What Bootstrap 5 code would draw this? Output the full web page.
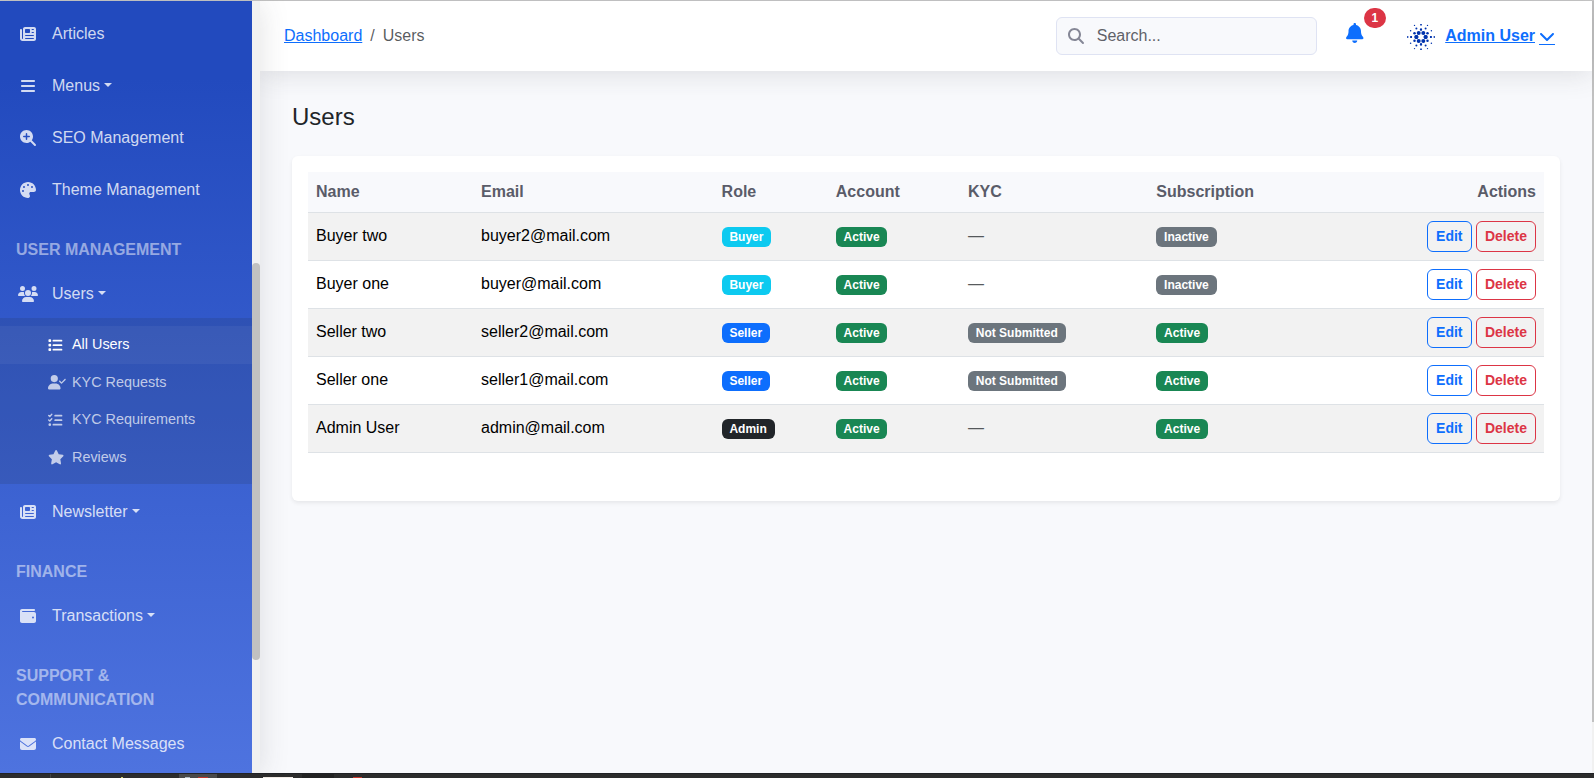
<!DOCTYPE html>
<html lang="en">
<head>
<meta charset="utf-8">
<title>Users - Dashboard</title>
<link href="https://cdn.jsdelivr.net/npm/bootstrap@5.3.0/dist/css/bootstrap.min.css" rel="stylesheet">
<style>
body{font-family:"Liberation Sans",Arial,sans-serif;background:#f8f9fc;height:778px;overflow:hidden}
.app-shell{height:773px;border-top:1px solid #c8c8c8}
.side-wrap{width:260px;z-index:5;box-shadow:0 .15rem 1.75rem 0 rgba(58,59,69,.15)}
.side-menu{width:252px;padding-top:9px;background:linear-gradient(180deg,#224abe 10%,#4e73df 100%)}
.side-scroll{width:8px;background:#f1f1f1;padding-top:262px}
.side-thumb{height:397px;border-radius:4px;background:#c1c1c1}
.side-link{height:48px;padding:0 16px;margin-bottom:4px;color:rgba(255,255,255,.8)}
.side-link.has-sub{margin-bottom:0}
.side-link .ico-slot{width:24px;margin-right:12px}
.side-head{padding:20px 16px 8px;font-weight:700;line-height:24px;color:rgba(255,255,255,.5)}
.side-sub{background:rgba(0,0,0,.15);background:rgba(33,37,41,.13);padding:8px 0;margin:0 0 4px}
.sub-link{height:37.6px;padding-left:48px;font-size:14.4px;color:rgba(255,255,255,.7)}
.sub-link.active{background:rgba(255,255,255,.05);color:#fff}
.sub-link .ico-slot{width:16px;margin-right:8px}
.fa-ico{height:1em;width:auto;fill:currentColor;flex:none;overflow:visible;display:block}
.top-bar{height:70px;padding:0 37px 0 24px;box-shadow:0 .15rem 1.75rem 0 rgba(58,59,69,.15);z-index:2}
.search-box{width:261px;height:38px;border:1px solid #dfe3f3;border-radius:6px;background:#f8f9fc;padding-left:11px;color:#858796}
.search-box span{color:#5f6168;margin-left:12.5px}
.bell{font-size:20px;margin:-6px 42.5px 0 28.5px;width:17px}
.bell-count{font-size:12px;line-height:12px;padding:4.2px 7.8px;left:18px;top:-15.5px}
.avatar{margin-right:8px;margin-top:2px}
.chev{margin-left:4px;height:20px;padding-top:5px;border-bottom:1px solid currentColor;margin-top:1px}
.chev svg{height:16px;margin-top:-2px}
.page-body{padding:32px 32px 0}
.page-body h1{font-size:24px;line-height:28.8px;margin:0 0 24px;font-weight:400}
.users-card{border:0;border-radius:6px;padding:16px 16px 48px;box-shadow:0 2px 4px rgba(0,0,0,.075)}
.users-table{table-layout:fixed;--bs-table-striped-color:#000;--bs-table-color:#000}
.users-table tbody td{color:#000}
.users-table th{background:#f8f9fc;color:#5a5c69}
.users-table .btn{font-weight:700;border-radius:6px}
.row-actions{gap:4.45px}
.page-scroll{width:2px;background:#f1f1f1}
.page-scroll div{height:721px;background:#c1c1c1}
.task-strip{height:5px;background:#2c2c2c;border-top:1px solid #202125}
.task-strip i{display:block;height:1px}
.task-strip .task-open{height:4px;width:38px;background:#4b4b4b;margin-left:56px;padding:0 9px 0 6px}
</style>
</head>
<body>
<svg width="0" height="0" class="position-absolute">
<symbol id="news" viewBox="0 0 512 512"><path d="M96 96c0-35.300 28.700-64 64-64H448c35.300 0 64 28.700 64 64V416c0 35.300-28.700 64-64 64H80c-44.200 0-80-35.800-80-80V128c0-17.700 14.300-32 32-32s32 14.300 32 32V400c0 8.800 7.200 16 16 16s16-7.200 16-16V96zm64 24v80c0 13.300 10.700 24 24 24H296c13.300 0 24-10.700 24-24V120c0-13.300-10.700-24-24-24H184c-13.300 0-24 10.700-24 24zm208-8c0 8.800 7.200 16 16 16h48c8.800 0 16-7.200 16-16s-7.200-16-16-16H384c-8.800 0-16 7.200-16 16zm0 96c0 8.800 7.200 16 16 16h48c8.800 0 16-7.200 16-16s-7.200-16-16-16H384c-8.800 0-16 7.200-16 16zM160 304c0 8.800 7.200 16 16 16H432c8.800 0 16-7.200 16-16s-7.200-16-16-16H176c-8.800 0-16 7.200-16 16zm0 96c0 8.800 7.200 16 16 16H432c8.800 0 16-7.200 16-16s-7.200-16-16-16H176c-8.800 0-16 7.200-16 16z"/></symbol>
</svg>
<div class="app-shell d-flex">
  <div class="side-wrap d-flex flex-shrink-0 position-relative">
    <nav class="side-menu overflow-hidden">
      <div class="side-link d-flex align-items-center"><span class="ico-slot d-flex justify-content-center"><svg class="fa-ico" viewBox="0 0 512 512"><use href="#news"/></svg></span>Articles</div>
      <div class="side-link d-flex align-items-center"><span class="ico-slot d-flex justify-content-center"><svg class="fa-ico" viewBox="0 0 448 512"><path d="M0 96C0 78.300 14.300 64 32 64H416c17.700 0 32 14.300 32 32s-14.300 32-32 32H32C14.300 128 0 113.700 0 96zM0 256c0-17.700 14.300-32 32-32H416c17.700 0 32 14.300 32 32s-14.300 32-32 32H32c-17.700 0-32-14.300-32-32zM448 416c0 17.700-14.300 32-32 32H32c-17.700 0-32-14.300-32-32s14.300-32 32-32H416c17.700 0 32 14.300 32 32z"/></svg></span><span class="dropdown-toggle">Menus</span></div>
      <div class="side-link d-flex align-items-center"><span class="ico-slot d-flex justify-content-center"><svg class="fa-ico" viewBox="0 0 512 512"><path d="M416 208c0 45.900-14.900 88.300-40 122.700L502.600 457.400c12.500 12.500 12.500 32.800 0 45.300s-32.800 12.500-45.300 0L330.700 376c-34.400 25.200-76.800 40-122.700 40C93.100 416 0 322.900 0 208S93.100 0 208 0S416 93.100 416 208zM184 296c0 13.300 10.700 24 24 24s24-10.700 24-24V232h64c13.300 0 24-10.700 24-24s-10.700-24-24-24H232V120c0-13.300-10.700-24-24-24s-24 10.700-24 24v64H120c-13.300 0-24 10.700-24 24s10.700 24 24 24h64v64z"/></svg></span>SEO Management</div>
      <div class="side-link d-flex align-items-center"><span class="ico-slot d-flex justify-content-center"><svg class="fa-ico" viewBox="0 0 512 512"><path d="M512 256c0 .9 0 1.800 0 2.700c-.4 36.500-33.600 61.300-70.100 61.300H344c-26.500 0-48 21.500-48 48c0 3.400 .4 6.700 1 9.900c2.100 10.200 6.500 20 10.800 29.900c6.100 13.800 12.100 27.500 12.100 42c0 31.800-21.600 60.700-53.400 62c-3.500 .1-7 .2-10.600 .2C114.600 512 0 397.400 0 256S114.600 0 256 0S512 114.600 512 256zM128 288a32 32 0 1 0-64 0 32 32 0 1 0 64 0zm0-96a32 32 0 1 0 0-64 32 32 0 1 0 0 64zM288 96a32 32 0 1 0-64 0 32 32 0 1 0 64 0zm96 96a32 32 0 1 0 0-64 32 32 0 1 0 0 64z"/></svg></span>Theme Management</div>
      <div class="side-head">USER MANAGEMENT</div>
      <div class="side-link has-sub d-flex align-items-center"><span class="ico-slot d-flex justify-content-center"><svg class="fa-ico" viewBox="0 0 640 512"><path d="M144 0a80 80 0 1 1 0 160A80 80 0 1 1 144 0zM512 0a80 80 0 1 1 0 160A80 80 0 1 1 512 0zM0 298.700C0 239.800 47.800 192 106.700 192h42.700c15.900 0 31 3.500 44.600 9.700c-1.300 7.200-1.900 14.700-1.900 22.300c0 38.200 16.800 72.500 43.300 96H21.300C9.600 320 0 310.400 0 298.700zM405.300 320c26-23.500 42.700-57.800 42.700-96c0-7.600-.7-15-1.900-22.300c13.600-6.300 28.700-9.700 44.600-9.700h42.700C592.200 192 640 239.800 640 298.700c0 11.800-9.600 21.300-21.300 21.300H405.300zM224 224a96 96 0 1 1 192 0 96 96 0 1 1-192 0zM128 485.300C128 411.700 187.700 352 261.300 352H378.700C452.300 352 512 411.700 512 485.300c0 14.700-11.900 26.700-26.700 26.700H154.700c-14.700 0-26.700-11.900-26.700-26.700z"/></svg></span><span class="dropdown-toggle">Users</span></div>
      <div class="side-sub">
        <div class="sub-link active d-flex align-items-center"><span class="ico-slot d-flex"><svg class="fa-ico" viewBox="0 0 512 512"><path d="M40 48C26.700 48 16 58.700 16 72v48c0 13.300 10.700 24 24 24H88c13.300 0 24-10.700 24-24V72c0-13.300-10.700-24-24-24H40zM192 64c-17.700 0-32 14.300-32 32s14.300 32 32 32H480c17.700 0 32-14.300 32-32s-14.300-32-32-32H192zm0 160c-17.700 0-32 14.300-32 32s14.300 32 32 32H480c17.700 0 32-14.300 32-32s-14.300-32-32-32H192zm0 160c-17.700 0-32 14.300-32 32s14.300 32 32 32H480c17.700 0 32-14.300 32-32s-14.300-32-32-32H192zM16 232v48c0 13.300 10.700 24 24 24H88c13.300 0 24-10.700 24-24V232c0-13.300-10.700-24-24-24H40c-13.300 0-24 10.700-24 24zM40 368c-13.300 0-24 10.700-24 24v48c0 13.300 10.700 24 24 24H88c13.300 0 24-10.700 24-24V392c0-13.300-10.700-24-24-24H40z"/></svg></span>All Users</div>
        <div class="sub-link d-flex align-items-center"><span class="ico-slot d-flex"><svg class="fa-ico" viewBox="0 0 640 512"><path d="M96 128a128 128 0 1 1 256 0A128 128 0 1 1 96 128zM0 482.300C0 383.800 79.800 304 178.300 304h91.400C368.200 304 448 383.800 448 482.300c0 16.400-13.300 29.700-29.700 29.700H29.700C13.300 512 0 498.700 0 482.300zM625 177L497 305c-9.400 9.400-24.600 9.400-33.900 0l-64-64c-9.400-9.400-9.400-24.600 0-33.900s24.600-9.400 33.900 0l47 47L591 143c9.400-9.400 24.600-9.400 33.900 0s9.400 24.600 0 33.900z"/></svg></span>KYC Requests</div>
        <div class="sub-link d-flex align-items-center"><span class="ico-slot d-flex"><svg class="fa-ico" viewBox="0 0 512 512"><path d="M24 88l40 38 72-80M24 248l40 38 72-80" fill="none" stroke="currentColor" stroke-width="48" stroke-linecap="round" stroke-linejoin="round"/><path d="M256 96H480M256 256H480M192 416H480" fill="none" stroke="currentColor" stroke-width="64" stroke-linecap="round"/><circle cx="64" cy="416" r="48"/></svg></span>KYC Requirements</div>
        <div class="sub-link d-flex align-items-center"><span class="ico-slot d-flex"><svg class="fa-ico" viewBox="0 0 576 512"><path d="M316.900 18C311.600 7 300.400 0 288.100 0s-23.400 7-28.800 18L195 150.300 51.400 171.500c-12 1.800-22 10.200-25.700 21.700s-.7 24.200 7.900 32.700L137.800 329 113.200 474.700c-2 12 3 24.200 12.900 31.300s23 8 33.800 2.300l128.300-68.500 128.300 68.500c10.800 5.700 23.900 4.900 33.800-2.300s14.900-19.300 12.900-31.300L438.500 329 542.700 225.900c8.600-8.500 11.700-21.200 7.900-32.700s-13.700-19.900-25.700-21.700L381.200 150.300 316.900 18z"/></svg></span>Reviews</div>
      </div>
      <div class="side-link d-flex align-items-center"><span class="ico-slot d-flex justify-content-center"><svg class="fa-ico" viewBox="0 0 512 512"><use href="#news"/></svg></span><span class="dropdown-toggle">Newsletter</span></div>
      <div class="side-head">FINANCE</div>
      <div class="side-link d-flex align-items-center"><span class="ico-slot d-flex justify-content-center"><svg class="fa-ico" viewBox="0 0 512 512"><path d="M64 32C28.700 32 0 60.700 0 96V416c0 35.300 28.700 64 64 64H448c35.300 0 64-28.700 64-64V192c0-35.300-28.700-64-64-64H80c-8.800 0-16-7.200-16-16s7.200-16 16-16H448c17.700 0 32-14.300 32-32s-14.300-32-32-32H64zM416 272a32 32 0 1 1 0 64 32 32 0 1 1 0-64z"/></svg></span><span class="dropdown-toggle">Transactions</span></div>
      <div class="side-head">SUPPORT &amp;<br>COMMUNICATION</div>
      <div class="side-link d-flex align-items-center"><span class="ico-slot d-flex justify-content-center"><svg class="fa-ico" viewBox="0 0 512 512"><path d="M48 64C21.500 64 0 85.500 0 112c0 15.100 7.100 29.300 19.200 38.400L236.800 313.600c11.400 8.500 27 8.500 38.400 0L492.800 150.400c12.100-9.100 19.200-23.300 19.200-38.400c0-26.500-21.500-48-48-48H48zM0 176V384c0 35.300 28.700 64 64 64H448c35.300 0 64-28.700 64-64V176L294.400 339.200c-22.800 17.100-54 17.100-76.800 0L0 176z"/></svg></span>Contact Messages</div>
    </nav>
    <div class="side-scroll"><div class="side-thumb"></div></div>
  </div>

  <div class="flex-grow-1 d-flex flex-column">
    <header class="top-bar bg-white d-flex align-items-center position-relative">
      <ol class="breadcrumb mb-0 me-auto">
        <li class="breadcrumb-item"><a href="#">Dashboard</a></li>
        <li class="breadcrumb-item active">Users</li>
      </ol>
      <div class="search-box d-flex align-items-center"><svg class="fa-ico" viewBox="0 0 512 512"><path d="M416 208c0 45.900-14.900 88.300-40 122.700L502.600 457.400c12.500 12.500 12.500 32.800 0 45.300s-32.800 12.500-45.300 0L330.700 376c-34.400 25.200-76.800 40-122.700 40C93.100 416 0 322.900 0 208S93.100 0 208 0S416 93.100 416 208zM208 352a144 144 0 1 0 0-288 144 144 0 1 0 0 288z"/></svg><span>Search...</span></div>
      <div class="bell position-relative text-primary"><svg class="fa-ico" viewBox="0 0 448 512"><path d="M224 0c-17.700 0-32 14.300-32 32V51.200C119 66 64 130.600 64 208v18.800c0 47-17.300 92.400-48.500 127.600l-7.400 8.300c-8.400 9.400-10.400 22.900-5.300 34.400S19.400 416 32 416H416c12.600 0 24-7.400 29.200-18.900s3.100-25-5.300-34.400l-7.400-8.300C401.300 319.200 384 273.900 384 226.800V208c0-77.400-55-142-128-156.800V32c0-17.700-14.300-32-32-32zm45.300 493.300c12-12 18.700-28.300 18.700-45.300H160c0 17 6.700 33.300 18.700 45.300s28.300 18.700 45.300 18.700s33.300-6.700 45.300-18.700z"/></svg><span class="bell-count badge rounded-pill bg-danger position-absolute">1</span></div>
      <svg class="avatar" width="32" height="32" viewBox="-16 -16 32 32" fill="#0033ad">
        <g id="ray"><circle cx="2.300" cy="-4" r="2"/><circle cx="4.600" cy="0" r="2"/><circle cx="0" cy="-7.400" r="1.150"/><circle cx="6.500" cy="-3.750" r="1.250"/><circle cx="4.600" cy="-8.600" r="1"/><circle cx="9.900" cy="0" r="1"/><circle cx="0" cy="-12.300" r=".75"/><circle cx="10.400" cy="-6.200" r=".75"/><circle cx="6.500" cy="-11.600" r=".7"/><circle cx="13.300" cy="0" r=".7"/></g>
        <use href="#ray" transform="rotate(180)"/><use href="#ray" transform="scale(-1 1)"/><use href="#ray" transform="scale(1 -1)"/>
      </svg>
      <a href="#" class="user-link d-flex fw-bold"><span>Admin User</span><span class="chev"><svg class="fa-ico" viewBox="0 0 512 512"><path d="M233.400 406.600c12.500 12.500 32.800 12.500 45.300 0l192-192c12.500-12.500 12.500-32.800 0-45.300s-32.800-12.500-45.300 0L256 338.700 86.600 169.400c-12.500-12.500-32.800-12.500-45.300 0s-12.500 32.800 0 45.300l192 192z"/></svg></span></a>
    </header>
    <main class="page-body">
      <h1>Users</h1>
      <div class="card users-card">
        <table class="table table-striped align-middle users-table mb-0">
          <colgroup><col style="width:165px"><col style="width:240.600px"><col style="width:114.200px"><col style="width:132.200px"><col style="width:188.300px"><col></colgroup>
          <thead><tr><th>Name</th><th>Email</th><th>Role</th><th>Account</th><th>KYC</th><th><div class="d-flex justify-content-between"><span>Subscription</span><span>Actions</span></div></th></tr></thead>
          <tbody>
            <tr><td>Buyer two</td><td>buyer2@mail.com</td><td><span class="badge bg-info">Buyer</span></td><td><span class="badge bg-success">Active</span></td><td><span class="text-muted">—</span></td><td><div class="d-flex justify-content-between align-items-center"><span><span class="badge bg-secondary">Inactive</span></span><span class="row-actions d-flex"><a class="btn btn-sm btn-outline-primary">Edit</a><a class="btn btn-sm btn-outline-danger">Delete</a></span></div></td></tr>
            <tr><td>Buyer one</td><td>buyer@mail.com</td><td><span class="badge bg-info">Buyer</span></td><td><span class="badge bg-success">Active</span></td><td><span class="text-muted">—</span></td><td><div class="d-flex justify-content-between align-items-center"><span><span class="badge bg-secondary">Inactive</span></span><span class="row-actions d-flex"><a class="btn btn-sm btn-outline-primary">Edit</a><a class="btn btn-sm btn-outline-danger">Delete</a></span></div></td></tr>
            <tr><td>Seller two</td><td>seller2@mail.com</td><td><span class="badge bg-primary">Seller</span></td><td><span class="badge bg-success">Active</span></td><td><span class="badge bg-secondary">Not Submitted</span></td><td><div class="d-flex justify-content-between align-items-center"><span><span class="badge bg-success">Active</span></span><span class="row-actions d-flex"><a class="btn btn-sm btn-outline-primary">Edit</a><a class="btn btn-sm btn-outline-danger">Delete</a></span></div></td></tr>
            <tr><td>Seller one</td><td>seller1@mail.com</td><td><span class="badge bg-primary">Seller</span></td><td><span class="badge bg-success">Active</span></td><td><span class="badge bg-secondary">Not Submitted</span></td><td><div class="d-flex justify-content-between align-items-center"><span><span class="badge bg-success">Active</span></span><span class="row-actions d-flex"><a class="btn btn-sm btn-outline-primary">Edit</a><a class="btn btn-sm btn-outline-danger">Delete</a></span></div></td></tr>
            <tr><td>Admin User</td><td>admin@mail.com</td><td><span class="badge bg-dark">Admin</span></td><td><span class="badge bg-success">Active</span></td><td><span class="text-muted">—</span></td><td><div class="d-flex justify-content-between align-items-center"><span><span class="badge bg-success">Active</span></span><span class="row-actions d-flex"><a class="btn btn-sm btn-outline-primary">Edit</a><a class="btn btn-sm btn-outline-danger">Delete</a></span></div></td></tr>
          </tbody>
        </table>
      </div>
    </main>
  </div>
  <div class="page-scroll flex-shrink-0"><div></div></div>
</div>
<div class="task-strip d-flex align-items-end">
  <i style="width:1px;height:4px;background:#444;margin-left:50px"></i>
  <i style="width:2px;background:#d9d96a;margin-left:70px"></i>
  <div class="task-open d-flex align-items-end justify-content-between"><i style="width:5px;background:#b9c4cc"></i><i style="width:10px;background:#c9372c"></i></div>
  <i style="width:30px;background:#f3ece6;margin-left:46px"></i>
  <i style="width:32px;height:4px;background:#222;margin-left:9px"></i>
  <i style="width:9px;background:#c9372c;margin-left:19px"></i>
</div>
</body>
</html>
